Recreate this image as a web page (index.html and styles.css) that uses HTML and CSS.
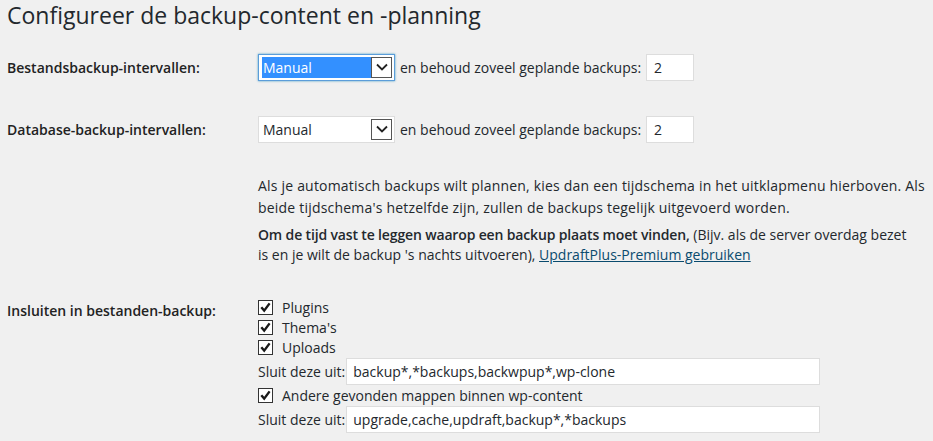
FILE: index.html
```html
<!DOCTYPE HTML>
<html>
<head>
<title>UpdraftPlus instellingen</title>
<link rel="stylesheet" href="styles.css">
</head>
<body>
  <h2 class="title">Configureer de backup-content en -planning</h2>

  <div class="row interval">
    <div class="label">Bestandsbackup-intervallen:</div>
    <div class="field">
      <span class="select focused"><span class="value">Manual</span><span class="arrow"><svg width="12" height="8" viewBox="0 0 12 8"><path d="M1 1.5 L6 6.5 L11 1.5" fill="none" stroke="#222" stroke-width="1.8"/></svg></span></span>
      <span class="keep">en behoud zoveel geplande backups:</span>
      <span class="num">2</span>
    </div>
  </div>

  <div class="row interval">
    <div class="label">Database-backup-intervallen:</div>
    <div class="field">
      <span class="select"><span class="value">Manual</span><span class="arrow"><svg width="12" height="8" viewBox="0 0 12 8"><path d="M1 1.5 L6 6.5 L11 1.5" fill="none" stroke="#222" stroke-width="1.8"/></svg></span></span>
      <span class="keep">en behoud zoveel geplande backups:</span>
      <span class="num">2</span>
    </div>
  </div>

  <div class="row info">
    <div class="label"></div>
    <div class="field">
      <p>Als je automatisch backups wilt plannen, kies dan een tijdschema in het uitklapmenu hierboven. Als beide tijdschema's hetzelfde zijn, zullen de backups tegelijk uitgevoerd worden.</p>
      <p class="premium"><strong>Om de tijd vast te leggen waarop een backup plaats moet vinden,</strong> (Bijv. als de server overdag bezet is en je wilt de backup 's nachts uitvoeren), <a href="#">UpdraftPlus-Premium gebruiken</a></p>
    </div>
  </div>

  <div class="row include">
    <div class="label">Insluiten in bestanden-backup:</div>
    <div class="field">
      <div class="check-row"><span class="check"><svg width="13" height="13" viewBox="0 0 13 13"><path d="M2.3 6.3 L5.2 9.6 L10.6 2.4" fill="none" stroke="#1a1a1a" stroke-width="2.4"/></svg></span>Plugins</div>
      <div class="check-row"><span class="check"><svg width="13" height="13" viewBox="0 0 13 13"><path d="M2.3 6.3 L5.2 9.6 L10.6 2.4" fill="none" stroke="#1a1a1a" stroke-width="2.4"/></svg></span>Thema's</div>
      <div class="check-row"><span class="check"><svg width="13" height="13" viewBox="0 0 13 13"><path d="M2.3 6.3 L5.2 9.6 L10.6 2.4" fill="none" stroke="#1a1a1a" stroke-width="2.4"/></svg></span>Uploads</div>
      <div class="exclude"><span>Sluit deze uit:</span><span class="text-input">backup*,*backups,backwpup*,wp-clone</span></div>
      <div class="check-row"><span class="check"><svg width="13" height="13" viewBox="0 0 13 13"><path d="M2.3 6.3 L5.2 9.6 L10.6 2.4" fill="none" stroke="#1a1a1a" stroke-width="2.4"/></svg></span>Andere gevonden mappen binnen wp-content</div>
      <div class="exclude"><span>Sluit deze uit:</span><span class="text-input">upgrade,cache,updraft,backup*,*backups</span></div>
    </div>
  </div>
</body>
</html>
```

FILE: styles.css
```css
body {
  margin: 0;
  padding: 0 7px;
  background: #f0f0f0;
  color: #23282d;
  font-family: "Open Sans", sans-serif;
  font-size: 14px;
}

.title {
  margin: 0;
  font-size: 23px;
  font-weight: 400;
  line-height: 30px;
}

.row {
  display: flex;
}

.label {
  width: 251px;
  flex-shrink: 0;
  font-weight: 600;
  color: #222;
}

.interval {
  align-items: center;
  height: 28px;
}

.interval:nth-of-type(1) {
  margin-top: 23px;
}

.interval + .interval {
  margin-top: 34px;
}

.field {
  display: flex;
  align-items: center;
  flex-wrap: wrap;
}

.select {
  display: inline-flex;
  align-items: center;
  box-sizing: border-box;
  width: 137px;
  height: 27px;
  padding: 0 2px 0 3px;
  background: #fff;
  border: 1px solid #ddd;
}

.select.focused {
  border-color: #5b9dd9;
  box-shadow: 0 0 2px rgba(30, 140, 190, .8);
}

.value {
  flex: 1;
  height: 21px;
  line-height: 21px;
  padding-left: 1px;
}

.focused .value {
  background: #3390ff;
  color: #fff;
}

.arrow {
  box-sizing: border-box;
  width: 21px;
  height: 21px;
  border: 1px solid #555;
  background: #fff;
  display: flex;
  align-items: center;
  justify-content: center;
}

.keep {
  margin: 0 5px;
}

.num {
  box-sizing: border-box;
  width: 48px;
  height: 27px;
  padding: 0 7px;
  line-height: 25px;
  background: #fff;
  border: 1px solid #ddd;
}

.info {
  margin-top: 32px;
}

.info .field {
  display: block;
  flex-shrink: 0;
  width: 674px;
  line-height: 22px;
  letter-spacing: 0.2px;
}

.info p {
  margin: 0 0 6px;
}

.info .premium {
  line-height: 20px;
  padding-right: 16px;
  letter-spacing: 0;
}

.info strong {
  font-weight: 600;
  letter-spacing: -0.15px;
}

.info a {
  color: #0a4b6e;
}

.include {
  margin-top: 26px;
}

.include .label {
  padding-top: 4px;
}

.include .field {
  display: block;
}

.check-row {
  display: flex;
  align-items: center;
  height: 20px;
}

.check {
  box-sizing: border-box;
  width: 15px;
  height: 15px;
  margin-right: 9px;
  border: 1px solid #333;
  background: #fff;
  display: flex;
  align-items: center;
  justify-content: center;
}

.exclude {
  display: flex;
  align-items: center;
  margin: 1px 0 0;
}

.text-input {
  box-sizing: border-box;
  width: 474px;
  height: 27px;
  margin-left: 1px;
  padding: 0 6px;
  line-height: 25px;
  background: #fff;
  border: 1px solid #ddd;
}
```
